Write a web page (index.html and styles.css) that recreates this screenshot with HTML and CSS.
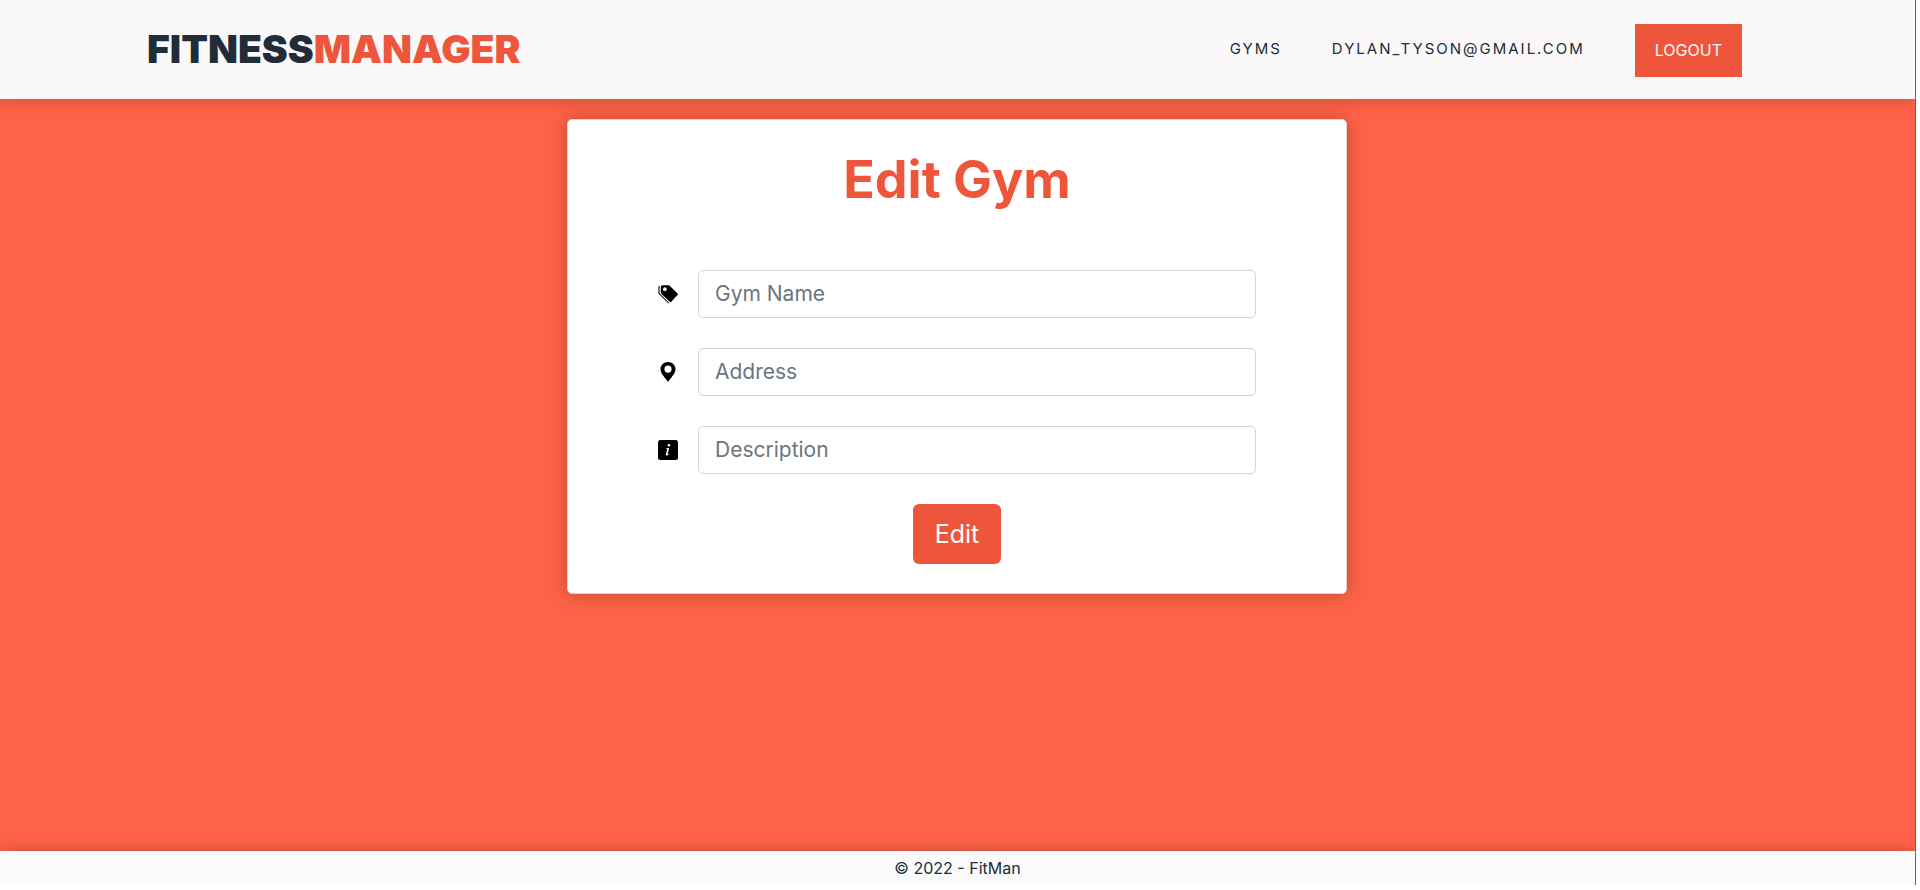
FILE: index.html
```html
<!DOCTYPE html>
<html lang="en">
<head>
<meta charset="utf-8">
<meta name="viewport" content="width=device-width, initial-scale=1">
<title>Edit Gym - FitMan</title>
<link rel="stylesheet" href="styles.css">
</head>
<body>
<div class="page">
  <header class="header">
    <a class="logo" href="#">FITNESS<span class="logo-accent">MANAGER</span></a>
    <nav class="nav">
      <a class="nav-link" href="#">GYMS</a>
      <a class="nav-link" href="#">DYLAN_TYSON@GMAIL.COM</a>
      <button class="logout" type="button">LOGOUT</button>
    </nav>
  </header>
  <main class="main">
    <form class="card">
      <h1 class="title">Edit Gym</h1>
      <div class="field">
        <label class="field-icon" for="gym-name" aria-label="Gym Name">
          <svg viewBox="0 0 512 512" width="20" height="20" aria-hidden="true"><path fill-rule="evenodd" d="M34 52H56Q40 62 40 82V224Q40 240 51 251L286 486L268 500L22 254Q12 244 12 228V78Q12 56 34 52ZM118 32H270Q288 32 300 44L500 242Q520 262 500 282L340 454Q320 474 300 454L84 250Q72 238 72 220V78Q72 32 118 32ZM176 84A48 48 0 1 0 176 180A48 48 0 1 0 176 84Z"/></svg>
        </label>
        <input class="input" id="gym-name" type="text" placeholder="Gym Name">
      </div>
      <div class="field">
        <label class="field-icon" for="address" aria-label="Address">
          <svg viewBox="0 0 20 20" width="20" height="20" aria-hidden="true"><path fill-rule="evenodd" d="M10 0C5.700 0 2.500 3.200 2.500 7.300C2.500 12 7.500 16 10 20C12.500 16 17.500 12 17.500 7.300C17.500 3.200 14.300 0 10 0ZM10 3.500A3.600 3.600 0 1 1 10 10.700A3.600 3.600 0 1 1 10 3.500Z"/></svg>
        </label>
        <input class="input" id="address" type="text" placeholder="Address">
      </div>
      <div class="field">
        <label class="field-icon" for="description" aria-label="Description">
          <svg viewBox="0 0 20 20" width="20" height="20" aria-hidden="true"><rect width="20" height="20" rx="2.500"/><circle cx="10.900" cy="5.200" r="1.300" fill="#fff"/><path d="M8 8.300L11.200 7.900L9.700 13.700Q9.500 14.700 10.900 13.700L11.200 14Q8.800 16.300 8.100 15.200Q7.700 14.700 8 13.500L9.200 8.900L8 8.800Z" fill="#fff"/></svg>
        </label>
        <input class="input" id="description" type="text" placeholder="Description">
      </div>
      <button class="submit" type="submit">Edit</button>
    </form>
  </main>
  <footer class="footer">© 2022 - FitMan</footer>
</div>
</body>
</html>
```
FILE: styles.css
```css
* {
  box-sizing: border-box;
}

body {
  margin: 0;
  padding: 0 4px 5px 0;
  background: #fff;
  color: #212c38;
  font-family: Inter, "Liberation Sans", sans-serif;
}

.page {
  display: flex;
  flex-direction: column;
  min-height: calc(100vh - 5px);
  overflow: hidden;
  border-right: 1px solid #666;
  background: #ff6347;
}

.header {
  display: flex;
  align-items: flex-start;
  justify-content: space-between;
  padding: 24px 173px 22px 147px;
  background: #faf8f9;
  box-shadow: 0 0 15px rgba(0, 0, 0, 0.25);
}

.logo {
  color: #212c38;
  font-size: 39px;
  font-weight: 900;
  line-height: 50px;
  text-decoration: none;
}

.logo-accent {
  color: #ed563b;
}

.nav {
  display: flex;
  align-items: flex-start;
  gap: 50px;
}

.nav-link {
  color: #212c38;
  font-size: 15px;
  line-height: 50px;
  letter-spacing: 2px;
  text-decoration: none;
}

.logout {
  padding: 13px 20px 14px;
  border: 0;
  background: #ed563b;
  color: #faf8f9;
  font: 16px/26px Inter, "Liberation Sans", sans-serif;
}

.main {
  display: flex;
  flex: 1;
  align-items: flex-start;
  justify-content: center;
  padding: 20px 21px 20px 20px;
}

.card {
  display: flex;
  flex-direction: column;
  gap: 30px;
  width: 100%;
  max-width: 780px;
  padding: 29px 90px;
  border: 1px solid #e0d4d2;
  border-radius: 5px;
  background: #fff;
  box-shadow: 0 0 20px rgba(0, 0, 0, 0.25);
}

.title {
  margin: 0 0 29px;
  color: #ed563b;
  font-size: 52px;
  font-weight: 700;
  line-height: 62px;
  text-align: center;
}

.field {
  display: flex;
  align-items: center;
  gap: 20px;
}

.field-icon {
  display: flex;
}

.input {
  flex: 1;
  min-width: 0;
  padding: 8px 16px;
  border: 1px solid #ced4da;
  border-radius: 5px;
  background: #fff;
  color: #212c38;
  font: 21px/30px Inter, "Liberation Sans", sans-serif;
}

.input::placeholder {
  color: #6c757d;
  opacity: 1;
}

.submit {
  align-self: center;
  padding: 12px 22px;
  border: 0;
  border-radius: 6px;
  background: #ed563b;
  color: #fff;
  font: 25px/36px Inter, "Liberation Sans", sans-serif;
}

.footer {
  padding: 5px;
  background: #f9fafb;
  box-shadow: 0 0 15px rgba(0, 0, 0, 0.25);
  font-size: 16px;
  line-height: 24px;
  text-align: center;
}
```
